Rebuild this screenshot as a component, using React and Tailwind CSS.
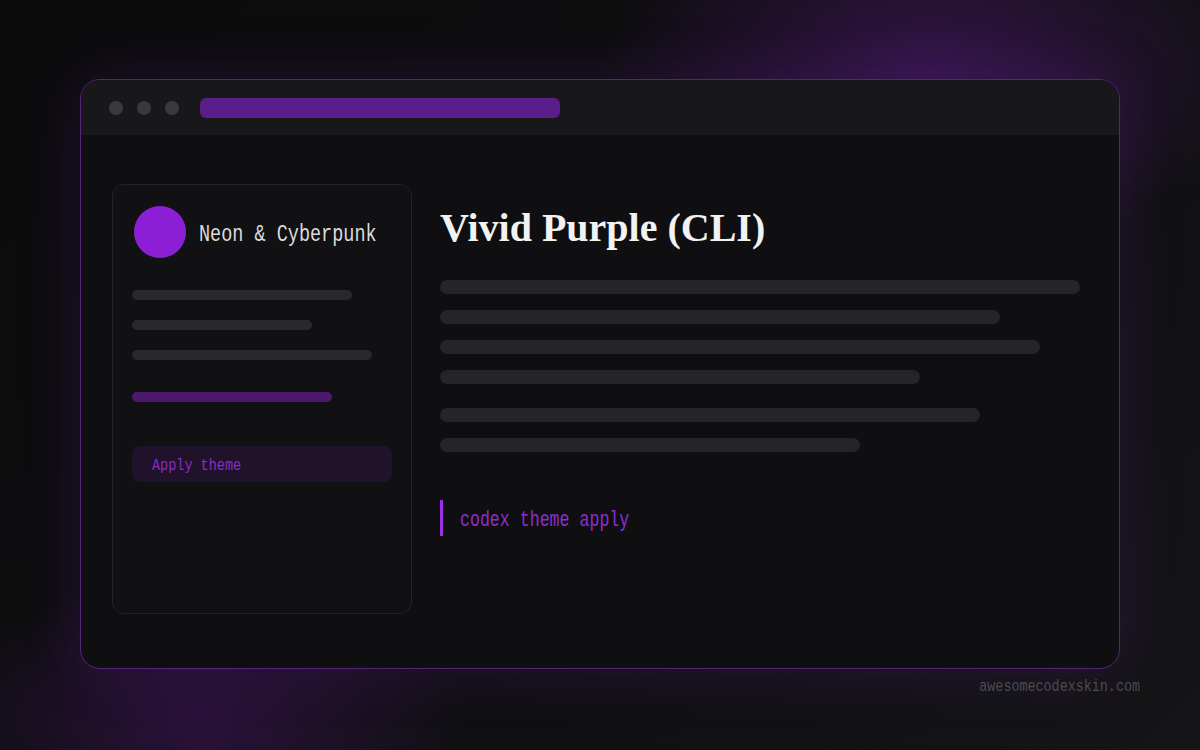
export default function App() {
  const mono = { fontFamily: '"Liberation Mono", "DejaVu Sans Mono", monospace' };
  return (
    <div
      className="w-[1200px] h-[750px] overflow-hidden flex flex-col bg-[#0d0d0f] bg-[radial-gradient(ellipse_440px_250px_at_930px_70px,rgba(105,30,150,0.42),transparent_75%),radial-gradient(ellipse_360px_190px_at_200px_720px,rgba(90,25,130,0.38),transparent_75%),linear-gradient(135deg,#0b0b0c_0%,#0e0e10_50%,#151517_100%)]"
    >
      <div className="pt-[79px] pl-[80px]">
        <div className="w-[1040px] h-[590px] rounded-[20px] border border-[#55257a] bg-[#0f0f11] overflow-hidden flex flex-col shadow-[0_0_60px_rgba(110,35,170,0.22)]">
          {/* top bar */}
          <div className="h-[55px] bg-[#18181a] flex items-center pl-[28px] shrink-0">
            <div className="flex gap-[14px]">
              <div className="w-[14px] h-[14px] rounded-full bg-[#3a3a3e]" />
              <div className="w-[14px] h-[14px] rounded-full bg-[#3a3a3e]" />
              <div className="w-[14px] h-[14px] rounded-full bg-[#3a3a3e]" />
            </div>
            <div className="ml-[21px] w-[360px] h-[20px] rounded-[6px] bg-[#5b1d89]" />
          </div>
          {/* body */}
          <div className="flex pt-[49px] pl-[31px] gap-[28px]">
            {/* sidebar */}
            <div className="w-[300px] h-[430px] rounded-[12px] border border-[#232326] bg-[#111113] pt-[21px] pl-[19px] flex flex-col">
              <div className="flex items-center gap-[13px] pl-[2px]">
                <div className="w-[52px] h-[52px] rounded-full bg-[#8c1fd6]" />
                <span className="pt-[6px] text-[18.5px] text-[#dcdcdc] leading-none scale-y-[1.28]" style={mono}>
                  Neon &amp; Cyberpunk
                </span>
              </div>
              <div className="mt-[32px] flex flex-col gap-[20px]">
                <div className="w-[220px] h-[10px] rounded-full bg-[#29292c]" />
                <div className="w-[180px] h-[10px] rounded-full bg-[#29292c]" />
                <div className="w-[240px] h-[10px] rounded-full bg-[#29292c]" />
              </div>
              <div className="mt-[32px] w-[200px] h-[10px] rounded-full bg-[#4d196f]" />
              <div className="mt-[44px] w-[260px] h-[36px] rounded-[8px] bg-[#20122b] flex items-center pl-[20px]">
                <span className="pt-[4px] text-[13.5px] text-[#8a2cc6] leading-none scale-y-[1.28]" style={mono}>
                  Apply theme
                </span>
              </div>
            </div>
            {/* main */}
            <div className="flex flex-col pt-[24px]">
              <h1
                className="text-[40px] leading-none font-bold text-[#f2f2f2]"
                style={{ fontFamily: '"Liberation Serif", "Times New Roman", serif' }}
              >
                Vivid Purple (CLI)
              </h1>
              <div className="mt-[32px] flex flex-col gap-[16px]">
                <div className="w-[640px] h-[14px] rounded-full bg-[#252528]" />
                <div className="w-[560px] h-[14px] rounded-full bg-[#252528]" />
                <div className="w-[600px] h-[14px] rounded-full bg-[#252528]" />
                <div className="w-[480px] h-[14px] rounded-full bg-[#252528]" />
              </div>
              <div className="mt-[24px] flex flex-col gap-[16px]">
                <div className="w-[540px] h-[14px] rounded-full bg-[#252528]" />
                <div className="w-[420px] h-[14px] rounded-full bg-[#252528]" />
              </div>
              <div className="mt-[48px] h-[36px] border-l-[3px] border-[#9b2fe2] flex items-center pl-[17px]">
                <span className="pt-[5px] text-[16.6px] text-[#8e2dcf] leading-none scale-y-[1.28]" style={mono}>
                  codex theme apply
                </span>
              </div>
            </div>
          </div>
        </div>
      </div>
      <div className="w-[1140px] flex justify-end mt-[11px]">
        <span className="text-[13.4px] text-[#4b4b50] leading-none scale-y-[1.28]" style={mono}>
          awesomecodexskin.com
        </span>
      </div>
    </div>
  );
}
